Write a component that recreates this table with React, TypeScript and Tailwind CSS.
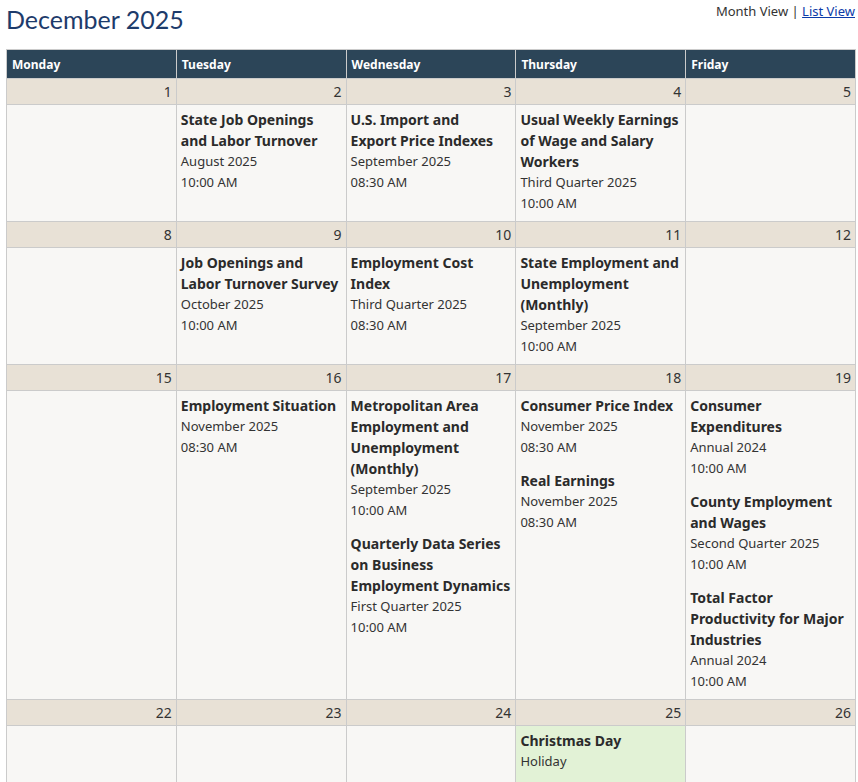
import React from 'react';

type Ev = { title: string; period: string; time?: string };

const weeks: { days: number[]; events: (Ev[] | null)[]; holiday?: number }[] = [
  {
    days: [1, 2, 3, 4, 5],
    events: [
      null,
      [{ title: 'State Job Openings and Labor Turnover', period: 'August 2025', time: '10:00 AM' }],
      [{ title: 'U.S. Import and\nExport Price Indexes', period: 'September 2025', time: '08:30 AM' }],
      [{ title: 'Usual Weekly Earnings of Wage and Salary Workers', period: 'Third Quarter 2025', time: '10:00 AM' }],
      null,
    ],
  },
  {
    days: [8, 9, 10, 11, 12],
    events: [
      null,
      [{ title: 'Job Openings and Labor Turnover Survey', period: 'October 2025', time: '10:00 AM' }],
      [{ title: 'Employment Cost Index', period: 'Third Quarter 2025', time: '08:30 AM' }],
      [{ title: 'State Employment and Unemployment (Monthly)', period: 'September 2025', time: '10:00 AM' }],
      null,
    ],
  },
  {
    days: [15, 16, 17, 18, 19],
    events: [
      null,
      [{ title: 'Employment Situation', period: 'November 2025', time: '08:30 AM' }],
      [
        { title: 'Metropolitan Area Employment and Unemployment (Monthly)', period: 'September 2025', time: '10:00 AM' },
        { title: 'Quarterly Data Series on Business Employment Dynamics', period: 'First Quarter 2025', time: '10:00 AM' },
      ],
      [
        { title: 'Consumer Price Index', period: 'November 2025', time: '08:30 AM' },
        { title: 'Real Earnings', period: 'November 2025', time: '08:30 AM' },
      ],
      [
        { title: 'Consumer Expenditures', period: 'Annual 2024', time: '10:00 AM' },
        { title: 'County Employment and Wages', period: 'Second Quarter 2025', time: '10:00 AM' },
        { title: 'Total Factor Productivity for Major Industries', period: 'Annual 2024', time: '10:00 AM' },
      ],
    ],
  },
  {
    days: [22, 23, 24, 25, 26],
    events: [null, null, null, [{ title: 'Christmas Day', period: 'Holiday' }], null],
    holiday: 3,
  },
];

const dayNames = ['Monday', 'Tuesday', 'Wednesday', 'Thursday', 'Friday'];

export default function App() {
  return (
    <div className="min-h-[782px] bg-white pl-[6px] font-['Tahoma','Noto_Sans',sans-serif] text-[13px] text-[#333]">
      <div className="flex items-start justify-between w-[850px]">
        <h1 className="pt-[2px] text-[25px] leading-[34px] text-[#1d3b6b] font-['Lato',sans-serif]">December 2025</h1>
        <div className="pt-[1px] pr-[1px] text-[13px] leading-[20px] text-[#333]">
          Month View | <a className="text-[#0b3ba8] underline cursor-pointer">List View</a>
        </div>
      </div>
      <table className="mt-[13px] w-[850px] table-fixed border-collapse">
        <thead>
          <tr>
            {dayNames.map((d) => (
              <th
                key={d}
                className="h-[29px] border border-[#cbcbcb] bg-[#2c4558] px-[5px] pt-[1px] text-left text-[12px] font-bold text-white"
              >
                {d}
              </th>
            ))}
          </tr>
        </thead>
        <tbody>
          {weeks.map((w, wi) => (
            <React.Fragment key={wi}>
              <tr>
                {w.days.map((n) => (
                  <td
                    key={n}
                    className="h-[26px] border border-[#cbcbcb] bg-[#e8e1d6] px-[4px] text-right text-[14px] leading-[20px]"
                  >
                    {n}
                  </td>
                ))}
              </tr>
              <tr>
                {w.events.map((evs, ci) => (
                  <td
                    key={ci}
                    className={
                      'h-[117px] border border-[#cbcbcb] px-[4px] pt-[4px] pb-[7px] align-top leading-[21px] ' +
                      (w.holiday === ci ? 'bg-[#e2f2d6]' : 'bg-[#f8f7f5]')
                    }
                  >
                    <div className="flex flex-col gap-[12px]">
                      {(evs ?? []).map((e, ei) => (
                        <div key={ei}>
                          <div className="whitespace-pre-line text-[14px] font-bold text-[#2b2b2b]">{e.title}</div>
                          <div>{e.period}</div>
                          {e.time && <div>{e.time}</div>}
                        </div>
                      ))}
                    </div>
                  </td>
                ))}
              </tr>
            </React.Fragment>
          ))}
        </tbody>
      </table>
    </div>
  );
}
